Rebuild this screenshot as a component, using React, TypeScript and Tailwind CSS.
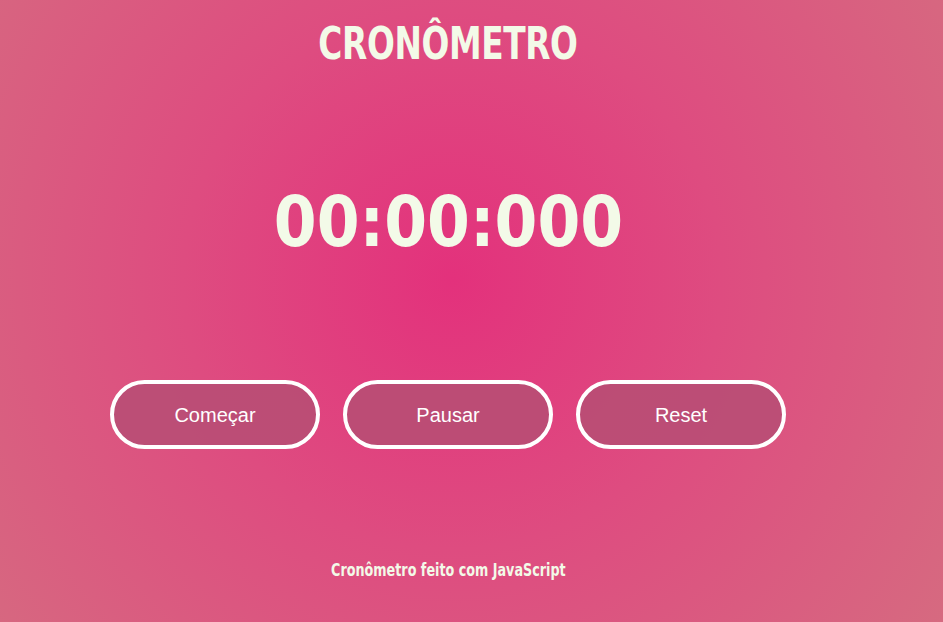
import React from "react";

const cond = "font-['DejaVu_Sans',sans-serif] font-bold text-[#f3fae8] inline-block";

export default function App() {
  const buttons = ["Começar", "Pausar", "Reset"];

  return (
    <div className="h-screen w-full overflow-hidden bg-[radial-gradient(circle_at_48%_45%,#e3317c_0%,#de4c80_45%,#d66a80_100%)] flex flex-col items-center pr-[47px]">
      <h1 className={`${cond} mt-[14px] text-[44px] leading-[60px] tracking-[-0.5px] [transform:scaleX(0.745)]`}>
        CRONÔMETRO
      </h1>

      <div className={`${cond} mt-[98px] text-[70px] leading-[100px] [transform:scaleX(0.88)]`}>
        00:00:000
      </div>

      <div className="mt-[108px] flex gap-[23px]">
        {buttons.map((b) => (
          <button
            key={b}
            className="w-[210px] h-[69px] rounded-full border-[4px] border-white bg-[#b84e74]/90 text-white text-[20px] font-['Liberation_Sans',Arial,sans-serif]"
          >
            {b}
          </button>
        ))}
      </div>

      <p className={`${cond} mt-auto mb-[39px] text-[17px] [transform:scaleX(0.75)]`}>
        Cronômetro feito com JavaScript
      </p>
    </div>
  );
}
